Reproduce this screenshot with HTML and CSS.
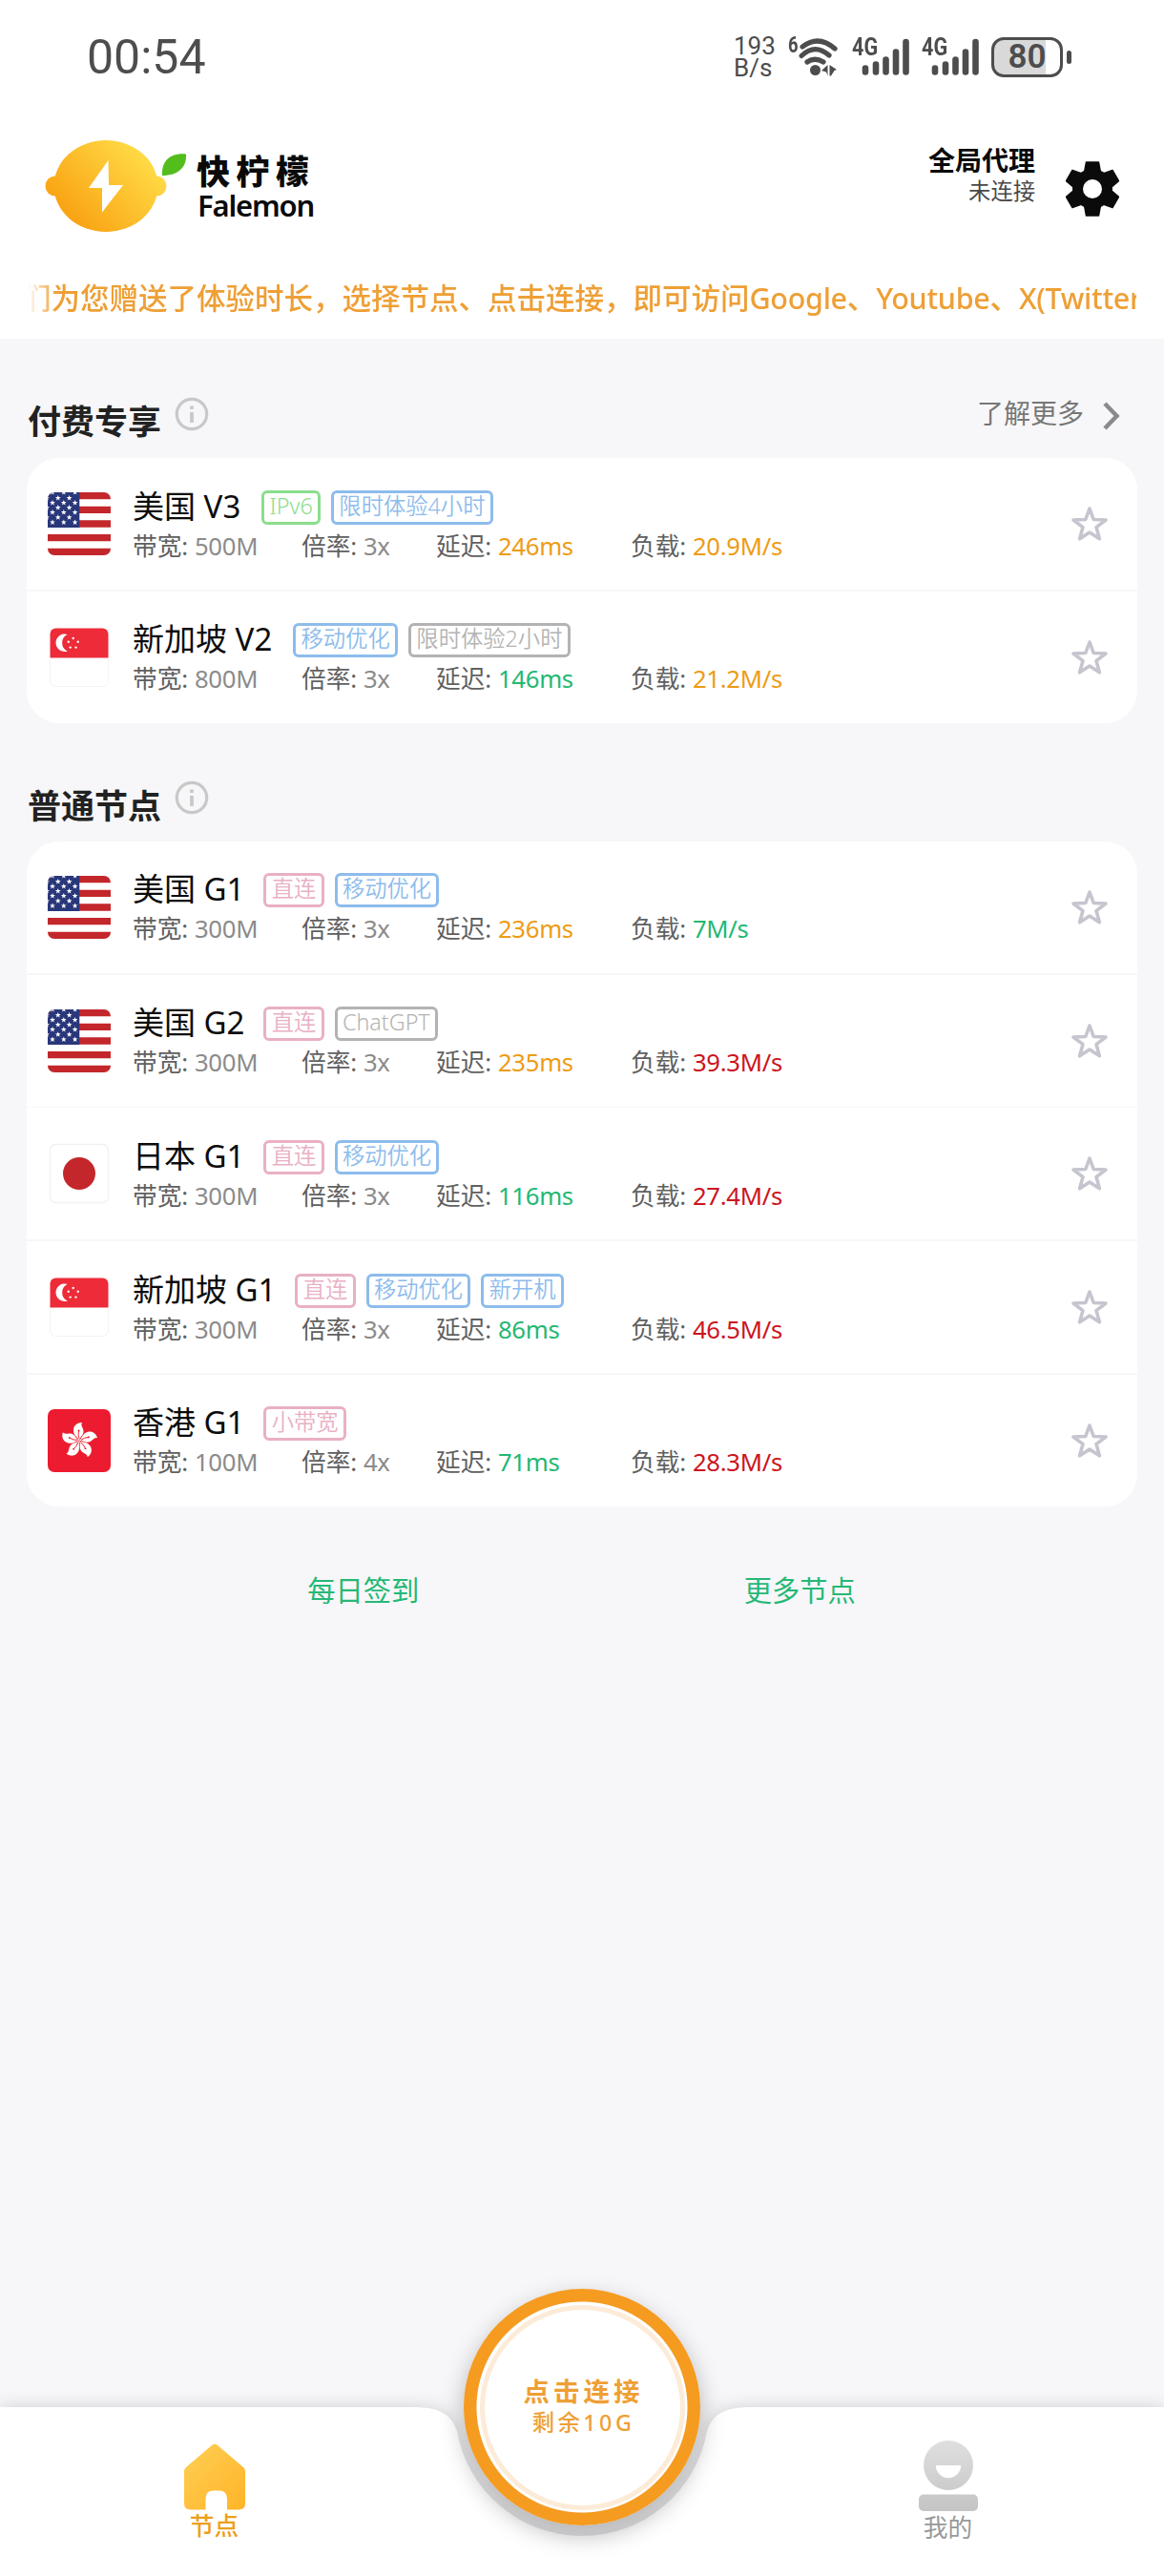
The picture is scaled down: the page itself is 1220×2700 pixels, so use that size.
FILE: index.html
```html
<!DOCTYPE html>
<html lang="zh-CN">
<head>
  <meta charset="UTF-8">
  <title>快柠檬 Falemon</title>
  <link rel="stylesheet" href="styles.css">
</head>
<body>

<svg class="defs" width="0" height="0">
  <defs>
    <linearGradient id="lemonFill" gradientUnits="userSpaceOnUse" x1="20" y1="95" x2="108" y2="10">
      <stop offset="0.05" stop-color="#f9a010"/>
      <stop offset="0.9" stop-color="#ffd843"/>
    </linearGradient>
    <linearGradient id="homeFill" x1="0" y1="0" x2="1" y2="1">
      <stop offset="0" stop-color="#ffcf55"/>
      <stop offset="1" stop-color="#ffb428"/>
    </linearGradient>
    <linearGradient id="mineFill" gradientUnits="userSpaceOnUse" x1="0" y1="0" x2="0" y2="74">
      <stop offset="0" stop-color="#dfdfdf"/>
      <stop offset="1" stop-color="#c4c4c4"/>
    </linearGradient>
    <path id="tinyStar" d="M0-3 .8-1 2.9-.9 1.2.4 1.8 2.5 0 1.3-1.8 2.5-1.2.4-2.9-.9-.8-1Z" fill="#fff"/>
    <clipPath id="flagClip"><rect width="66" height="66" rx="7"/></clipPath>
    <clipPath id="flagClipSmall"><rect x="2.5" y="2.5" width="61" height="61" rx="6"/></clipPath>
    <clipPath id="cantonClip"><rect width="33.3" height="37"/></clipPath>
  </defs>

  <symbol id="flag-us" viewBox="0 0 66 66">
    <g clip-path="url(#flagClip)">
      <rect width="66" height="66" fill="#fff"/>
      <path d="M0 3.67H66M0 18.33H66M0 33H66M0 47.67H66M0 62.33H66" stroke="#c3272b" stroke-width="7.33"/>
      <rect width="33.3" height="37" fill="#29377a"/>
      <g clip-path="url(#cantonClip)">
        <use href="#tinyStar" x="5" y="0"/><use href="#tinyStar" x="16.8" y="0"/><use href="#tinyStar" x="28.6" y="0"/>
        <use href="#tinyStar" x="-1" y="6"/><use href="#tinyStar" x="10.8" y="6"/><use href="#tinyStar" x="22.6" y="6"/>
        <use href="#tinyStar" x="5" y="11"/><use href="#tinyStar" x="16.8" y="11"/><use href="#tinyStar" x="28.6" y="11"/>
        <use href="#tinyStar" x="-1" y="16"/><use href="#tinyStar" x="10.8" y="16"/><use href="#tinyStar" x="22.6" y="16"/>
        <use href="#tinyStar" x="5" y="21"/><use href="#tinyStar" x="16.8" y="21"/><use href="#tinyStar" x="28.6" y="21"/>
        <use href="#tinyStar" x="-1" y="26.3"/><use href="#tinyStar" x="10.8" y="26.3"/><use href="#tinyStar" x="22.6" y="26.3"/>
        <use href="#tinyStar" x="5" y="31.4"/><use href="#tinyStar" x="16.8" y="31.4"/><use href="#tinyStar" x="28.6" y="31.4"/>
      </g>
    </g>
  </symbol>

  <symbol id="flag-sg" viewBox="0 0 66 66">
    <g clip-path="url(#flagClipSmall)">
      <rect width="66" height="66" fill="#fff"/>
      <rect width="66" height="33.5" fill="#ee2b38"/>
      <path d="M20.700 9A9.200 9.200 0 1 0 20.700 26.400A9.600 9.600 0 0 1 20.700 9Z" fill="#fff"/>
      <g fill="#fff">
        <circle cx="26.7" cy="13" r="1.2"/><circle cx="21.7" cy="16.8" r="1.2"/><circle cx="31.7" cy="16.8" r="1.2"/>
        <circle cx="23.7" cy="22.6" r="1.2"/><circle cx="29.5" cy="22.6" r="1.2"/>
      </g>
    </g>
    <path d="M2.5 34V57.5A6 6 0 0 0 8.5 63.5H57.5A6 6 0 0 0 63.5 57.5V34" fill="none" stroke="#f3f3f3"/>
  </symbol>

  <symbol id="flag-jp" viewBox="0 0 66 66">
    <rect x="2.5" y="2.5" width="61" height="61" rx="6" fill="#fff" stroke="#f1f1f1" stroke-width="1.3"/>
    <circle cx="33" cy="33" r="17" fill="#c3272b"/>
  </symbol>

  <symbol id="flag-hk" viewBox="0 0 66 66">
    <rect width="66" height="66" rx="7" fill="#ed1b2f"/>
    <g id="petal">
      <path d="M33 33C31.500 29 27 28 27 22C27 17 31 14 36 14C34 17.500 38 20 37.500 24C37 28 33.800 29 33 33Z" fill="#fff"/>
      <path d="M33 31Q31.500 27 32.500 23" fill="none" stroke="#ed1b2f" stroke-width="0.9"/>
      <circle cx="32.6" cy="22.5" r="1" fill="#ed1b2f"/>
    </g>
    <use href="#petal" transform="rotate(72 33 33)"/>
    <use href="#petal" transform="rotate(144 33 33)"/>
    <use href="#petal" transform="rotate(216 33 33)"/>
    <use href="#petal" transform="rotate(288 33 33)"/>
  </symbol>

  <symbol id="star" viewBox="0 0 40 40">
    <path d="M20 4 24.200 15.500 37 16 27 23.600 30.400 35.800 20 29 9.600 35.800 13 23.600 3 16 15.800 15.500Z" fill="none" stroke="#c5c5cf" stroke-width="3.6" stroke-linejoin="round"/>
  </symbol>

  <symbol id="info" viewBox="0 0 36 36">
    <circle cx="18" cy="18" r="15.7" fill="none" stroke="#c8c8c8" stroke-width="3.2"/>
    <path d="M18 16V27M18 9.500V13" stroke="#c8c8c8" stroke-width="3.8"/>
  </symbol>

  <symbol id="signal" viewBox="0 0 60 42">
    <path d="M14 32.500V36.500M25 28.500V36.500M35.500 23.500V36.500M46 15.500V36.500M56.500 5V36.500" stroke="#4d4d4d" stroke-width="6.6" stroke-linecap="round"/>
  </symbol>
</svg>

<div class="page">

  <div class="top">
    <div class="statusbar">
      <span class="clock">00:54</span>
      <div class="status-icons">
        <div class="speed"><span>193</span><span>B/s</span></div>
        <div class="wifi">
          <span class="wifi-gen">6</span>
          <svg width="46" height="42" viewBox="0 0 46 42">
            <g fill="none" stroke="#4d4d4d" stroke-width="5.2" stroke-linecap="round">
              <path d="M5 10Q22 -3 39 12"/>
              <path d="M4 19.500Q18 6 33 19"/>
              <path d="M10 26Q18 20.500 27 26"/>
            </g>
            <circle cx="18.5" cy="34.5" r="5.5" fill="#4d4d4d"/>
            <path d="M25 35 31.500 29V40.500L30 36.500ZM33.500 29 41 34 38.500 35 35 40.500H33.500Z" fill="#4d4d4d"/>
          </svg>
        </div>
        <div class="cell"><span class="cell-net">4G</span><svg width="60" height="42"><use href="#signal"/></svg></div>
        <div class="cell"><span class="cell-net">4G</span><svg width="60" height="42"><use href="#signal"/></svg></div>
        <div class="battery"><span>80</span></div>
        <div class="battery-cap"></div>
      </div>
    </div>

    <div class="header">
      <svg class="logo" width="150" height="100" viewBox="0 0 150 100">
        <g fill="url(#lemonFill)">
          <ellipse cx="64" cy="50" rx="54.5" ry="48"/>
          <circle cx="11" cy="50" r="10.5"/>
          <circle cx="117" cy="50" r="10.5"/>
        </g>
        <path d="M66.500 23 46 52H60V77.500L82 49H67Z" fill="#fff"/>
        <path d="M123 39C122 24 131 15 148 16.500C149 30 140 39 123 39Z" fill="#53bd1c"/>
      </svg>
      <div class="brand">
        <span class="brand-cn">快柠檬</span>
        <span class="brand-en">Falemon</span>
      </div>
      <div class="proxy">
        <span class="proxy-mode">全局代理</span>
        <span class="proxy-state">未连接</span>
      </div>
      <svg class="gear" width="56" height="58" viewBox="0 0 56 58">
        <g fill="#0b0b0b">
          <path id="tooth" d="M21.500 1H34.500L36.500 12H19.500ZM21.500 57H34.500L36.500 46H19.500Z" stroke="#0b0b0b" stroke-width="1.5" stroke-linejoin="round"/>
          <use href="#tooth" transform="rotate(60 28 29)"/>
          <use href="#tooth" transform="rotate(120 28 29)"/>
          <circle cx="28" cy="29" r="21"/>
        </g>
        <circle cx="28" cy="29" r="10" fill="#fff"/>
      </svg>
    </div>

    <div class="notice"><span>们为您赠送了体验时长，选择节点、点击连接，即可访问<b>Google</b>、<b>Youtube</b>、<b>X(Twitter)</b></span></div>
  </div>

  <div class="section-head">
    <h2>付费专享</h2>
    <svg class="info-icon" width="36" height="36"><use href="#info"/></svg>
    <div class="more">
      <span>了解更多</span>
      <svg width="20" height="30" viewBox="0 0 20 30"><path d="M3 2 15.500 15 3 28" fill="none" stroke="#8a8a8a" stroke-width="4.5"/></svg>
    </div>
  </div>

  <div class="card">
    <div class="node">
      <svg class="flag"><use href="#flag-us"/></svg>
      <div class="node-info">
        <div class="node-title"><span class="name name-v">美国 V3</span><i class="tag green">IPv6</i><i class="tag blue">限时体验4小时</i></div>
        <div class="stats"><span>带宽: <em>500M</em></span><span>倍率: <em>3x</em></span><span>延迟: <em class="warn">246ms</em></span><span>负载: <em class="warn">20.9M/s</em></span></div>
      </div>
      <svg class="fav"><use href="#star"/></svg>
    </div>
    <div class="node">
      <svg class="flag"><use href="#flag-sg"/></svg>
      <div class="node-info">
        <div class="node-title"><span class="name name-v">新加坡 V2</span><i class="tag blue">移动优化</i><i class="tag gray">限时体验2小时</i></div>
        <div class="stats"><span>带宽: <em>800M</em></span><span>倍率: <em>3x</em></span><span>延迟: <em class="good">146ms</em></span><span>负载: <em class="warn">21.2M/s</em></span></div>
      </div>
      <svg class="fav"><use href="#star"/></svg>
    </div>
  </div>

  <div class="section-head section-head-normal">
    <h2>普通节点</h2>
    <svg class="info-icon" width="36" height="36"><use href="#info"/></svg>
  </div>

  <div class="card">
    <div class="node">
      <svg class="flag"><use href="#flag-us"/></svg>
      <div class="node-info">
        <div class="node-title"><span class="name">美国 G1</span><i class="tag pink">直连</i><i class="tag blue">移动优化</i></div>
        <div class="stats"><span>带宽: <em>300M</em></span><span>倍率: <em>3x</em></span><span>延迟: <em class="warn">236ms</em></span><span>负载: <em class="good">7M/s</em></span></div>
      </div>
      <svg class="fav"><use href="#star"/></svg>
    </div>
    <div class="node">
      <svg class="flag"><use href="#flag-us"/></svg>
      <div class="node-info">
        <div class="node-title"><span class="name">美国 G2</span><i class="tag pink">直连</i><i class="tag gray">ChatGPT</i></div>
        <div class="stats"><span>带宽: <em>300M</em></span><span>倍率: <em>3x</em></span><span>延迟: <em class="warn">235ms</em></span><span>负载: <em class="bad">39.3M/s</em></span></div>
      </div>
      <svg class="fav"><use href="#star"/></svg>
    </div>
    <div class="node">
      <svg class="flag"><use href="#flag-jp"/></svg>
      <div class="node-info">
        <div class="node-title"><span class="name">日本 G1</span><i class="tag pink">直连</i><i class="tag blue">移动优化</i></div>
        <div class="stats"><span>带宽: <em>300M</em></span><span>倍率: <em>3x</em></span><span>延迟: <em class="good">116ms</em></span><span>负载: <em class="bad">27.4M/s</em></span></div>
      </div>
      <svg class="fav"><use href="#star"/></svg>
    </div>
    <div class="node">
      <svg class="flag"><use href="#flag-sg"/></svg>
      <div class="node-info">
        <div class="node-title"><span class="name">新加坡 G1</span><i class="tag pink">直连</i><i class="tag blue">移动优化</i><i class="tag blue">新开机</i></div>
        <div class="stats"><span>带宽: <em>300M</em></span><span>倍率: <em>3x</em></span><span>延迟: <em class="good">86ms</em></span><span>负载: <em class="bad">46.5M/s</em></span></div>
      </div>
      <svg class="fav"><use href="#star"/></svg>
    </div>
    <div class="node">
      <svg class="flag"><use href="#flag-hk"/></svg>
      <div class="node-info">
        <div class="node-title"><span class="name">香港 G1</span><i class="tag pink">小带宽</i></div>
        <div class="stats"><span>带宽: <em>100M</em></span><span>倍率: <em>4x</em></span><span>延迟: <em class="good">71ms</em></span><span>负载: <em class="bad">28.3M/s</em></span></div>
      </div>
      <svg class="fav"><use href="#star"/></svg>
    </div>
  </div>

  <div class="links">
    <a>每日签到</a>
    <a>更多节点</a>
  </div>

  <div class="tabbar">
    <!-- bar with the round notch -->
    <svg class="tabbar-bg" width="1220" height="217" viewBox="0 0 1220 217">
      <path d="M0 40H432C462 40 473 48 479 65A133 133 0 0 0 741 65C747 48 758 40 788 40H1220V217H0Z" fill="#fff"/>
    </svg>
    <div class="tab active">
      <svg width="66" height="70" viewBox="0 0 66 70">
        <path d="M30 2Q33 -.500 36 2L63 25Q65 27 65 29V63Q65 69.500 58.500 69.500H46V58Q46 49.500 37.500 49.500H31.500Q23.500 49.500 23.500 58V69.500H7.500Q1 69.500 1 63V29Q1 27 3 25Z" fill="url(#homeFill)"/>
      </svg>
      <span>节点</span>
    </div>
    <div class="connect">
      <div class="connect-inner">
        <span class="connect-title">点击连接</span>
        <span class="connect-left">剩余10G</span>
      </div>
    </div>
    <div class="tab mine">
      <svg width="62" height="74" viewBox="0 0 62 74">
        <circle cx="31" cy="26" r="26" fill="url(#mineFill)"/>
        <path d="M17.800 26H44.200A13.200 13.200 0 0 1 17.800 26Z" fill="#fff"/>
        <rect y="56.5" width="62" height="17.5" rx="5" fill="url(#mineFill)"/>
      </svg>
      <span>我的</span>
    </div>
  </div>

</div>

</body>
</html>
```

FILE: styles.css
```css
* {
  box-sizing: border-box;
}
body {
  margin: 0;
  background: #f7f7f9;
  font-family: "Noto Sans", "Noto Sans CJK SC", sans-serif;
}
svg {
  display: block;
  flex: none;
}
.defs {
  position: absolute;
}
.page {
  display: flex;
  flex-direction: column;
  width: 1220px;
  height: 2700px;
  overflow: hidden;
}
.top {
  height: 355px;
  background: #fff;
}

/* status bar */
.statusbar {
  display: flex;
  align-items: center;
  justify-content: space-between;
  height: 120px;
  padding: 0 97px 0 91px;
  color: #4d4d4d;
  font-family: Roboto, sans-serif;
}
.clock {
  font-size: 50px;
}
.status-icons {
  display: flex;
  align-items: center;
}
.speed {
  display: flex;
  flex-direction: column;
  width: 56px;
  font-size: 26px;
  line-height: 23px;
}
.wifi {
  display: flex;
  width: 68px;
}
.wifi-gen {
  width: 11px;
  font-size: 23px;
  line-height: 18px;
  font-weight: 700;
  transform: scaleX(0.8);
}
.cell {
  position: relative;
  width: 73px;
}
.cell-net {
  position: absolute;
  top: 0;
  left: 0;
  font-size: 26px;
  line-height: 20px;
  font-weight: 700;
  transform: scaleX(0.83);
  transform-origin: left;
}
.battery {
  width: 75px;
  height: 42px;
  border: 3px solid #4d4d4d;
  border-radius: 13px;
  background: linear-gradient(90deg, #d9d9d9 78%, #fff 78%);
  text-align: center;
  font-size: 35px;
  line-height: 36px;
  font-weight: 600;
}
.battery-cap {
  width: 5px;
  height: 14px;
  margin-left: 4px;
  border-radius: 3px;
  background: #4d4d4d;
}

/* header */
.header {
  display: flex;
  height: 150px;
  padding: 25px 47px 0 47px;
}
.brand {
  display: flex;
  flex-direction: column;
  padding: 16px 0 0 9px;
  color: #0a0a0a;
}
.brand-cn {
  font-size: 35px;
  line-height: 37px;
  font-weight: 900;
  letter-spacing: 6.5px;
}
.brand-en {
  padding-left: 1px;
  font-size: 31px;
  line-height: 35px;
  font-weight: 600;
  letter-spacing: -1.2px;
}
.proxy {
  display: flex;
  flex-direction: column;
  margin-left: auto;
  padding-top: 6px;
  text-align: right;
}
.proxy-mode {
  color: #0a0a0a;
  font-size: 28px;
  line-height: 34px;
  font-weight: 700;
}
.proxy-state {
  color: #484848;
  font-size: 23.3px;
  line-height: 30px;
}
.gear {
  margin: 24px 0 0 32px;
}
.notice {
  height: 84px;
  margin: 0 29px;
  overflow: hidden;
  color: #ee9f35;
  font-size: 30.5px;
  line-height: 84px;
  font-weight: 500;
  white-space: nowrap;
  -webkit-mask-image: linear-gradient(90deg, transparent, #000 30px);
  mask-image: linear-gradient(90deg, transparent, #000 30px);
}
.notice span {
  margin-left: -6px;
}
.notice b {
  font-weight: 500;
  letter-spacing: -0.3px;
}

/* node lists */
.section-head {
  display: flex;
  height: 125px;
  padding: 0 45px 0 29px;
}
.section-head-normal {
  height: 124px;
}
.section-head-normal .info-icon {
  margin-top: 60px;
}
h2 {
  margin: 0;
  padding-top: 63px;
  color: #222;
  font-size: 35px;
  line-height: 48px;
  font-weight: 700;
}
.info-icon {
  margin: 61px 0 0 14px;
}
.more {
  display: flex;
  gap: 19px;
  margin-left: auto;
  padding-top: 59px;
  color: #777;
  font-size: 28px;
  line-height: 38px;
}
.more svg {
  margin-top: 7px;
}
.card {
  display: grid;
  gap: 1.75px;
  margin: 0 28px;
  border-radius: 34px;
  overflow: hidden;
}
.node {
  display: flex;
  align-items: center;
  height: 138px;
  padding: 0 30px 0 22px;
  background: #fff;
}
.flag {
  width: 66px;
  height: 66px;
}
.node-info {
  flex: 1;
  margin-left: 23px;
  padding-top: 3px;
}
.node-title {
  display: flex;
  gap: 11px;
  height: 36px;
  margin-bottom: 8px;
}
.name {
  margin-right: 9px;
  color: #0c0c0c;
  font-size: 33px;
  line-height: 33px;
}
.name-v {
  margin-right: 11px;
}
.tag {
  height: 36px;
  padding: 0 5.3px;
  border: 3px solid;
  border-radius: 6px;
  font-size: 23.3px;
  line-height: 27px;
  font-style: normal;
  font-weight: 350;
}
.tag.green { color: #8ade8c; }
.tag.blue { color: #8dbcec; }
.tag.gray { color: #b3b3b3; }
.tag.pink { color: #e9b0c4; }
.stats {
  display: grid;
  grid-template-columns: 177px 141px 204px auto;
  color: #606060;
  font-size: 25.7px;
  line-height: 30px;
}
.stats em {
  color: #8b8b8b;
  font-style: normal;
  letter-spacing: -0.3px;
}
.stats .warn { color: #ed9c14; }
.stats .good { color: #23b873; }
.stats .bad { color: #cc1420; }
.fav {
  width: 40px;
  height: 40px;
}

.links {
  display: grid;
  grid-template-columns: 1fr 1fr;
  padding: 66px 153px 0 152px;
  color: #26b876;
  text-align: center;
  font-size: 29.3px;
  line-height: 44px;
}

/* bottom tabs */
.tabbar {
  position: relative;
  display: flex;
  justify-content: space-between;
  height: 217px;
  margin-top: auto;
  padding: 0 190px 0 188px;
}
.tabbar-bg {
  position: absolute;
  left: 0;
  top: 0;
  overflow: visible;
  filter: drop-shadow(0 0 9px rgba(0, 0, 0, 0.16));
}
.tab {
  position: relative;
  display: flex;
  flex-direction: column;
  align-items: center;
  width: 73px;
  padding-top: 78px;
  font-size: 25.7px;
  line-height: 34px;
}
.active {
  color: #ee9f1c;
  font-weight: 500;
}
.mine {
  padding-top: 75px;
  color: #999;
}
.mine span {
  padding-top: 1px;
}
.connect {
  position: absolute;
  left: 486px;
  top: -84px;
  width: 248px;
  height: 248px;
  padding: 16.5px;
  border-radius: 50%;
  background: radial-gradient(circle, #fff 110px, #f59b20 111px);
  box-shadow: 0 10px 26px rgba(0, 0, 0, 0.28);
}
.connect-inner {
  display: flex;
  flex-direction: column;
  align-items: center;
  height: 100%;
  padding: 67px 0 0 3px;
  border: 5.5px solid #fcebd7;
  border-radius: 50%;
  color: #ee9f35;
}
.connect-title {
  font-size: 27.5px;
  line-height: 38px;
  font-weight: 600;
  letter-spacing: 4px;
}
.connect-left {
  font-size: 23.3px;
  line-height: 26px;
  font-weight: 500;
  letter-spacing: 3.5px;
}
```
